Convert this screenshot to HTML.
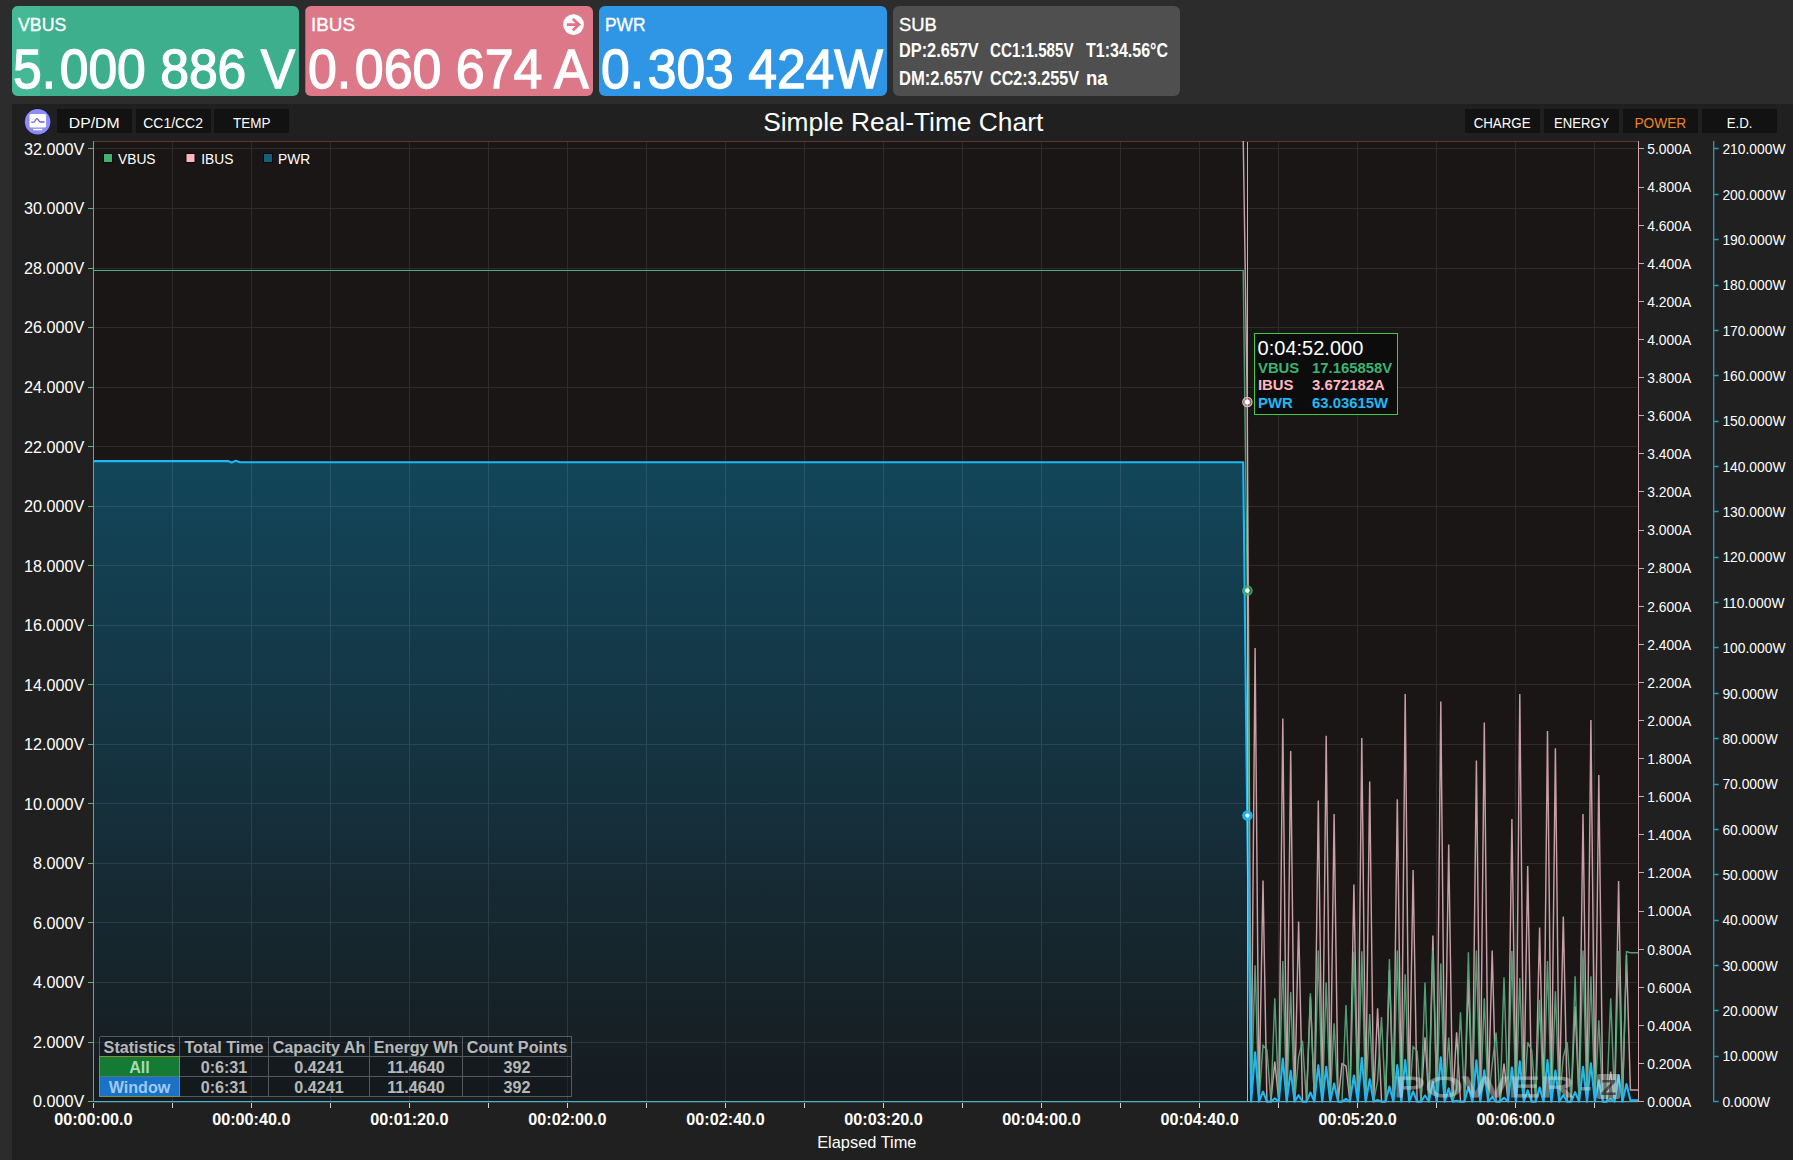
<!DOCTYPE html>
<html lang="en">
<head>
<meta charset="utf-8">
<title>Simple Real-Time Chart</title>
<style>
html,body{margin:0;padding:0;background:#2c2c2c;}
body{width:1793px;height:1160px;overflow:hidden;background:#2c2c2c;position:relative;font-family:"Liberation Sans",Arial,sans-serif;color:#fff;}
.card{position:absolute;top:6px;height:90px;border-radius:6px;overflow:hidden;}
.card .lbl{position:absolute;left:5.7px;top:9.8px;-webkit-text-stroke:0.35px #fff;font-size:18.7px;line-height:18.7px;white-space:pre;transform-origin:0 50%;transform:scaleX(.93);}
.card .val{position:absolute;left:0px;top:35.8px;font-size:55px;line-height:55px;white-space:pre;transform-origin:0 50%;-webkit-text-stroke:1.3px #fff;}
.card .val .dot{letter-spacing:3.8px;}
#c-vbus{left:12px;width:287px;background:#3daf8d;}
#c-vbus .bar{position:absolute;left:0;top:0;width:28px;height:90px;background:#45b896;}
#c-ibus{left:305px;width:288px;background:#dc7887;}
#c-ibus .bar{position:absolute;left:0;top:0;width:1px;height:90px;background:#b9596b;}
#c-pwr{left:599px;width:288px;background:#2e96e4;}
#c-sub{left:893px;width:287px;background:#4f4f4f;}
#c-sub .row{position:absolute;left:0;font-size:20px;line-height:20px;font-weight:bold;white-space:pre;}
#c-sub .row span{position:absolute;top:0;transform-origin:0 50%;transform:scaleX(.84);}
.panel{position:absolute;left:12px;top:104px;width:1781px;height:1056px;background:#202020;}
.btn{position:absolute;top:109px;width:75px;height:24.4px;background:#121212;font-size:15px;line-height:27.6px;text-align:center;color:#fff;}
.btn.on{color:#ee8420;}
.btn span{display:inline-block;transform-origin:50% 50%;}
svg.chart{position:absolute;left:0;top:0;}
svg.ico{position:absolute;}
</style>
</head>
<body>
<div class="card" id="c-vbus"><div class="bar"></div><div class="lbl" style="transform:scaleX(.95)">VBUS</div><div class="val" style="left:1.2px;transform:scaleX(.939)">5<span class="dot">.</span>000 886 V</div></div>
<div class="card" id="c-ibus"><div class="bar"></div><div class="lbl" style="transform:scaleX(1.01)">IBUS</div><div class="val" style="left:2.7px;transform:scaleX(.943)">0<span class="dot">.</span>060 674 A</div>
<svg class="ico" style="left:258px;top:8px" width="22" height="22" viewBox="0 0 22 22"><circle cx="10.5" cy="10.55" r="10.4" fill="#fff"/><path d="M3.8,10.55H15.6M9.8,4.9L16.0,10.55L9.8,16.2" fill="none" stroke="#e07387" stroke-width="2.7" stroke-linejoin="miter"/></svg></div>
<div class="card" id="c-pwr"><div class="lbl">PWR</div><div class="val" style="left:1.8px;transform:scaleX(.939)">0<span class="dot">.</span>303 424W</div></div>
<div class="card" id="c-sub"><div class="lbl" style="transform:scaleX(.985)">SUB</div>
<div class="row" style="top:33.9px"><span style="left:6.2px;transform:scaleX(.815)">DP:2.657V</span><span style="left:97px;transform:scaleX(.76)">CC1:1.585V</span><span style="left:192.7px;transform:scaleX(.8)">T1:34.56&deg;C</span></div>
<div class="row" style="top:61.8px"><span style="left:6.2px;transform:scaleX(.828)">DM:2.657V</span><span style="left:97px;transform:scaleX(.808)">CC2:3.255V</span><span style="left:193px;transform:scaleX(.93)">na</span></div>
</div>
<div class="panel"></div>
<svg class="ico" style="left:23px;top:107px" width="30" height="30" viewBox="23 107 30 30"><circle cx="37.6" cy="121.7" r="13.4" fill="#14143a"/><circle cx="37.6" cy="121.7" r="12.8" fill="#8e8df5"/><rect x="29.5" y="113.9" width="16.6" height="13.6" rx="1.6" fill="#fff"/><rect x="33.1" y="128.8" width="9.1" height="1.5" fill="#fff"/><path d="M31.7,122.1H33.6C35.2,122.1 35.6,118.6 36.9,118.6C38.2,118.6 38.8,122 40.6,122H44" fill="none" stroke="#6a5fd0" stroke-width="1.35" stroke-linecap="round"/></svg>
<div class="btn" style="left:57px"><span style="transform:scaleX(1.05)">DP/DM</span></div>
<div class="btn" style="left:135.5px"><span style="transform:scaleX(0.93)">CC1/CC2</span></div>
<div class="btn" style="left:214px"><span style="transform:scaleX(0.9)">TEMP</span></div>
<div class="btn" style="left:1465px"><span style="transform:scaleX(0.887)">CHARGE</span></div>
<div class="btn" style="left:1544px"><span style="transform:scaleX(0.872)">ENERGY</span></div>
<div class="btn on" style="left:1623px"><span style="transform:scaleX(0.913)">POWER</span></div>
<div class="btn" style="left:1702px"><span style="transform:scaleX(0.885)">E.D.</span></div>
<svg class="chart" width="1793" height="1160" viewBox="0 0 1793 1160" font-family="'Liberation Sans', Arial, sans-serif">
<defs><linearGradient id="pg" gradientUnits="userSpaceOnUse" x1="0" y1="461" x2="0" y2="1101"><stop offset="0" stop-color="#12465a"/><stop offset="0.5" stop-color="#15313e"/><stop offset="0.78" stop-color="#16252c"/><stop offset="1" stop-color="#161c20"/></linearGradient><clipPath id="pc"><rect x="93" y="141" width="1546" height="962"/></clipPath></defs>
<rect x="94" y="141" width="1545" height="960.5" fill="#191615"/>
<g clip-path="url(#pc)">
<path d="M93.5,1101.6 L93.5,461.1 L227.8,461.1 L231.8,462.6 L235.7,460.8 L239.7,462.2 L1243.2,462.2 L1247.2,815.6 L1251.1,1101.6 L1255.1,1052.2 L1259.0,1101.6 L1263.0,1091.7 L1266.9,1101.6 L1270.9,1101.6 L1274.8,1098.3 L1278.8,1101.6 L1282.8,1058.6 L1286.7,1101.6 L1290.7,1070.9 L1294.6,1101.6 L1298.6,1095.2 L1302.5,1101.6 L1306.5,1101.6 L1310.4,1092.5 L1314.4,1101.6 L1318.3,1065.2 L1322.3,1101.6 L1326.2,1066.8 L1330.2,1101.6 L1334.1,1083.6 L1338.1,1101.6 L1342.0,1101.6 L1346.0,1098.9 L1349.9,1101.6 L1353.9,1075.5 L1357.8,1101.6 L1361.8,1057.9 L1365.7,1101.6 L1369.7,1079.2 L1373.6,1101.6 L1377.6,1100.0 L1381.5,1101.6 L1385.5,1101.6 L1389.4,1086.6 L1393.4,1101.6 L1397.3,1065.0 L1401.3,1101.6 L1405.2,1060.1 L1409.2,1101.6 L1413.1,1091.5 L1417.1,1101.6 L1421.0,1101.6 L1425.0,1095.5 L1428.9,1101.6 L1432.9,1081.5 L1436.8,1101.6 L1440.8,1057.4 L1444.7,1101.6 L1448.7,1088.4 L1452.6,1101.6 L1456.6,1100.9 L1460.5,1101.6 L1464.5,1101.6 L1468.4,1087.0 L1472.4,1101.6 L1476.4,1060.3 L1480.3,1101.6 L1484.3,1070.3 L1488.2,1101.6 L1492.2,1097.1 L1496.1,1101.6 L1500.1,1101.6 L1504.0,1097.8 L1508.0,1101.6 L1511.9,1067.6 L1515.9,1101.6 L1519.8,1061.3 L1523.8,1101.6 L1527.7,1090.4 L1531.7,1101.6 L1535.6,1101.6 L1539.6,1087.4 L1543.5,1101.6 L1547.5,1060.0 L1551.4,1101.6 L1555.4,1070.5 L1559.3,1101.6 L1563.3,1095.0 L1567.2,1101.6 L1571.2,1101.6 L1575.1,1092.1 L1579.1,1101.6 L1583.0,1066.8 L1587.0,1101.6 L1590.9,1063.3 L1594.9,1101.6 L1598.8,1080.4 L1602.8,1101.6 L1606.7,1101.6 L1610.7,1099.1 L1614.6,1101.6 L1618.6,1075.0 L1622.5,1101.6 L1626.5,1084.0 L1630.4,1100.2 L1638.3,1100.2 L1638.3,1101.6 Z" fill="url(#pg)"/>
</g>
<path d="M172.5,141.5V1101M251.5,141.5V1101M330.5,141.5V1101M409.5,141.5V1101M488.5,141.5V1101M567.5,141.5V1101M646.5,141.5V1101M725.5,141.5V1101M804.5,141.5V1101M883.5,141.5V1101M962.5,141.5V1101M1041.5,141.5V1101M1120.5,141.5V1101M1199.5,141.5V1101M1278.5,141.5V1101M1357.5,141.5V1101M1436.5,141.5V1101M1515.5,141.5V1101M1594.5,141.5V1101M94,1042.5H1638M94,982.5H1638M94,922.5H1638M94,863.5H1638M94,803.5H1638M94,744.5H1638M94,684.5H1638M94,625.5H1638M94,565.5H1638M94,506.5H1638M94,446.5H1638M94,387.5H1638M94,327.5H1638M94,268.5H1638M94,208.5H1638M94,148.5H1638" stroke="#ffffff" stroke-opacity="0.095" stroke-width="1" fill="none" shape-rendering="crispEdges"/>
<path d="M94,141.5H1638" stroke="#8a5a3c" stroke-opacity="0.55" stroke-width="1" fill="none" shape-rendering="crispEdges"/>
<g clip-path="url(#pc)" fill="none" stroke-linejoin="miter" stroke-miterlimit="3">
<polyline points="93.5,137.5 1243.2,137.5 1247.2,402.0 1251.1,1101.6 1255.1,648.1 1259.0,1101.6 1263.0,880.6 1266.9,1101.6 1270.9,1101.6 1274.8,1061.6 1278.8,1101.6 1282.8,718.6 1286.7,1101.6 1290.7,751.0 1294.6,1101.6 1298.6,921.4 1302.5,1101.6 1306.5,1101.6 1310.4,996.8 1314.4,1101.6 1318.3,800.6 1322.3,1101.6 1326.2,735.8 1330.2,1101.6 1334.1,813.9 1338.1,1101.6 1342.0,1063.7 1346.0,1066.0 1349.9,1101.6 1353.9,884.4 1357.8,1101.6 1361.8,738.1 1365.7,1101.6 1369.7,781.5 1373.6,1101.6 1377.6,1008.2 1381.5,1101.6 1385.5,1101.6 1389.4,970.1 1393.4,1101.6 1397.3,799.2 1401.3,1101.6 1405.2,694.1 1409.2,1101.6 1413.1,870.1 1417.1,1101.6 1421.0,1101.6 1425.0,1037.4 1428.9,1101.6 1432.9,935.5 1436.8,1101.6 1440.8,701.5 1444.7,1101.6 1448.7,844.4 1452.6,1101.6 1456.6,1032.4 1460.5,1101.6 1464.5,1101.6 1468.4,979.7 1472.4,1101.6 1476.4,760.6 1480.3,1101.6 1484.3,722.4 1488.2,1101.6 1492.2,950.5 1496.1,1101.6 1500.1,1101.6 1504.0,1063.5 1508.0,1101.6 1511.9,819.0 1515.9,1101.6 1519.8,693.9 1523.8,1101.6 1527.7,866.1 1531.7,1101.6 1535.6,1101.6 1539.6,927.6 1543.5,1101.6 1547.5,731.0 1551.4,1101.6 1555.4,748.2 1559.3,1101.6 1563.3,916.4 1567.2,1101.6 1571.2,1101.6 1575.1,1006.3 1579.1,1101.6 1583.0,814.1 1587.0,1101.6 1590.9,720.0 1594.9,1101.6 1598.8,775.0 1602.8,1101.6 1606.7,1101.6 1610.7,1071.5 1614.6,1101.6 1618.6,881.0 1622.5,1101.6 1626.5,954.9 1630.4,1090.0 1638.3,1090.0" stroke="#e4b6be" stroke-width="1.45" stroke-opacity="0.86"/>
<path d="M94,270.5H1243.2" stroke="#4fae7c" stroke-width="1" shape-rendering="crispEdges"/>
<polyline points="1243.2,270.1 1247.2,590.6 1251.1,1101.6 1255.1,965.3 1259.0,1101.6 1263.0,1045.3 1266.9,1049.8 1270.9,1101.6 1274.8,998.3 1278.8,1101.6 1282.8,961.1 1286.7,1101.6 1290.7,992.0 1294.6,1101.6 1298.6,1056.9 1302.5,1040.9 1306.5,1101.6 1310.4,993.2 1314.4,1101.6 1318.3,950.4 1322.3,1101.6 1326.2,982.5 1330.2,1101.6 1334.1,1023.3 1338.1,1101.6 1342.0,1101.6 1346.0,1005.1 1349.9,1101.6 1353.9,951.6 1357.8,1101.6 1361.8,951.3 1365.7,1101.6 1369.7,1014.1 1373.6,1101.6 1377.6,1080.8 1381.5,1017.1 1385.5,1101.6 1389.4,959.0 1393.4,1101.6 1397.3,950.4 1401.3,1101.6 1405.2,974.2 1409.2,1101.6 1413.1,1046.8 1417.1,1051.0 1421.0,1101.6 1425.0,982.5 1428.9,1101.6 1432.9,950.4 1436.8,1101.6 1440.8,963.5 1444.7,1101.6 1448.7,1037.6 1452.6,1101.6 1456.6,1089.7 1460.5,1012.3 1464.5,1101.6 1468.4,952.2 1472.4,1101.6 1476.4,950.4 1480.3,1101.6 1484.3,998.3 1488.2,1101.6 1492.2,1064.1 1496.1,1032.5 1500.1,1101.6 1504.0,977.2 1508.0,1101.6 1511.9,951.0 1515.9,1101.6 1519.8,978.1 1523.8,1101.6 1527.7,1042.4 1531.7,1050.1 1535.6,1101.6 1539.6,999.8 1543.5,1101.6 1547.5,961.1 1551.4,1101.6 1555.4,991.4 1559.3,1101.6 1563.3,1056.9 1567.2,1042.1 1571.2,1101.6 1575.1,976.3 1579.1,1101.6 1583.0,950.4 1587.0,1101.6 1590.9,976.3 1594.9,1101.6 1598.8,1020.3 1602.8,1101.6 1606.7,1101.6 1610.7,998.3 1614.6,1101.6 1618.6,951.0 1622.5,1101.6 1626.5,951.6 1630.4,952.7 1638.3,952.7" stroke="#58ad80" stroke-width="1.45" stroke-opacity="0.9"/>
<polyline points="93.5,461.1 227.8,461.1 231.8,462.6 235.7,460.8 239.7,462.2 1243.2,462.2 1247.2,815.6 1251.1,1101.6 1255.1,1052.2 1259.0,1101.6 1263.0,1091.7 1266.9,1101.6 1270.9,1101.6 1274.8,1098.3 1278.8,1101.6 1282.8,1058.6 1286.7,1101.6 1290.7,1070.9 1294.6,1101.6 1298.6,1095.2 1302.5,1101.6 1306.5,1101.6 1310.4,1092.5 1314.4,1101.6 1318.3,1065.2 1322.3,1101.6 1326.2,1066.8 1330.2,1101.6 1334.1,1083.6 1338.1,1101.6 1342.0,1101.6 1346.0,1098.9 1349.9,1101.6 1353.9,1075.5 1357.8,1101.6 1361.8,1057.9 1365.7,1101.6 1369.7,1079.2 1373.6,1101.6 1377.6,1100.0 1381.5,1101.6 1385.5,1101.6 1389.4,1086.6 1393.4,1101.6 1397.3,1065.0 1401.3,1101.6 1405.2,1060.1 1409.2,1101.6 1413.1,1091.5 1417.1,1101.6 1421.0,1101.6 1425.0,1095.5 1428.9,1101.6 1432.9,1081.5 1436.8,1101.6 1440.8,1057.4 1444.7,1101.6 1448.7,1088.4 1452.6,1101.6 1456.6,1100.9 1460.5,1101.6 1464.5,1101.6 1468.4,1087.0 1472.4,1101.6 1476.4,1060.3 1480.3,1101.6 1484.3,1070.3 1488.2,1101.6 1492.2,1097.1 1496.1,1101.6 1500.1,1101.6 1504.0,1097.8 1508.0,1101.6 1511.9,1067.6 1515.9,1101.6 1519.8,1061.3 1523.8,1101.6 1527.7,1090.4 1531.7,1101.6 1535.6,1101.6 1539.6,1087.4 1543.5,1101.6 1547.5,1060.0 1551.4,1101.6 1555.4,1070.5 1559.3,1101.6 1563.3,1095.0 1567.2,1101.6 1571.2,1101.6 1575.1,1092.1 1579.1,1101.6 1583.0,1066.8 1587.0,1101.6 1590.9,1063.3 1594.9,1101.6 1598.8,1080.4 1602.8,1101.6 1606.7,1101.6 1610.7,1099.1 1614.6,1101.6 1618.6,1075.0 1622.5,1101.6 1626.5,1084.0 1630.4,1100.2 1638.3,1100.2" stroke="#1fb8f4" stroke-width="2.1" stroke-linejoin="round"/>
<path d="M94,1101.6H1638" stroke="#56aecb" stroke-width="1.4"/>
</g>
<g shape-rendering="crispEdges" fill="none">
<path d="M93.5,141V1102M88,1101.5H94M88,1042.5H94M88,982.5H94M88,922.5H94M88,863.5H94M88,803.5H94M88,744.5H94M88,684.5H94M88,625.5H94M88,565.5H94M88,506.5H94M88,446.5H94M88,387.5H94M88,327.5H94M88,268.5H94M88,208.5H94M88,148.5H94" stroke="#58b083" stroke-width="1"/>
<path d="M1638.5,141V1102M1638,1101.5H1644M1638,1063.5H1644M1638,1025.5H1644M1638,987.5H1644M1638,949.5H1644M1638,911.5H1644M1638,872.5H1644M1638,834.5H1644M1638,796.5H1644M1638,758.5H1644M1638,720.5H1644M1638,682.5H1644M1638,644.5H1644M1638,606.5H1644M1638,568.5H1644M1638,530.5H1644M1638,491.5H1644M1638,453.5H1644M1638,415.5H1644M1638,377.5H1644M1638,339.5H1644M1638,301.5H1644M1638,263.5H1644M1638,225.5H1644M1638,187.5H1644M1638,148.5H1644" stroke="#d9a3ab" stroke-width="1"/>
<path d="M1713.7,141V1102M1713,1101.5H1718.7M1713,1056.5H1718.7M1713,1010.5H1718.7M1713,965.5H1718.7M1713,920.5H1718.7M1713,874.5H1718.7M1713,829.5H1718.7M1713,784.5H1718.7M1713,738.5H1718.7M1713,693.5H1718.7M1713,647.5H1718.7M1713,602.5H1718.7M1713,557.5H1718.7M1713,511.5H1718.7M1713,466.5H1718.7M1713,421.5H1718.7M1713,375.5H1718.7M1713,330.5H1718.7M1713,285.5H1718.7M1713,239.5H1718.7M1713,194.5H1718.7M1713,148.5H1718.7" stroke="#2b9ab8" stroke-width="1.3" shape-rendering="auto"/>
<path d="M93.5,1103V1108M172.5,1103V1108M251.5,1103V1108M330.5,1103V1108M409.5,1103V1108M488.5,1103V1108M567.5,1103V1108M646.5,1103V1108M725.5,1103V1108M804.5,1103V1108M883.5,1103V1108M962.5,1103V1108M1041.5,1103V1108M1120.5,1103V1108M1199.5,1103V1108M1278.5,1103V1108M1357.5,1103V1108M1436.5,1103V1108M1515.5,1103V1108M1594.5,1103V1108" stroke="#d4d4d4" stroke-width="1"/>
</g>
<g fill="#ffffff" font-size="16.2px" text-anchor="end">
<text x="84.4" y="1107.4">0.000V</text>
<text x="84.4" y="1047.9">2.000V</text>
<text x="84.4" y="988.3">4.000V</text>
<text x="84.4" y="928.8">6.000V</text>
<text x="84.4" y="869.2">8.000V</text>
<text x="84.4" y="809.7">10.000V</text>
<text x="84.4" y="750.2">12.000V</text>
<text x="84.4" y="690.6">14.000V</text>
<text x="84.4" y="631.1">16.000V</text>
<text x="84.4" y="571.5">18.000V</text>
<text x="84.4" y="512.0">20.000V</text>
<text x="84.4" y="452.5">22.000V</text>
<text x="84.4" y="392.9">24.000V</text>
<text x="84.4" y="333.4">26.000V</text>
<text x="84.4" y="273.8">28.000V</text>
<text x="84.4" y="214.3">30.000V</text>
<text x="84.4" y="154.8">32.000V</text>
</g>
<g fill="#ffffff" font-size="13.85px">
<text x="1647.3" y="1106.9">0.000A</text>
<text x="1647.3" y="1068.8">0.200A</text>
<text x="1647.3" y="1030.7">0.400A</text>
<text x="1647.3" y="992.6">0.600A</text>
<text x="1647.3" y="954.5">0.800A</text>
<text x="1647.3" y="916.4">1.000A</text>
<text x="1647.3" y="878.3">1.200A</text>
<text x="1647.3" y="840.2">1.400A</text>
<text x="1647.3" y="802.1">1.600A</text>
<text x="1647.3" y="763.9">1.800A</text>
<text x="1647.3" y="725.8">2.000A</text>
<text x="1647.3" y="687.7">2.200A</text>
<text x="1647.3" y="649.6">2.400A</text>
<text x="1647.3" y="611.5">2.600A</text>
<text x="1647.3" y="573.4">2.800A</text>
<text x="1647.3" y="535.3">3.000A</text>
<text x="1647.3" y="497.2">3.200A</text>
<text x="1647.3" y="459.1">3.400A</text>
<text x="1647.3" y="421.0">3.600A</text>
<text x="1647.3" y="382.9">3.800A</text>
<text x="1647.3" y="344.8">4.000A</text>
<text x="1647.3" y="306.7">4.200A</text>
<text x="1647.3" y="268.6">4.400A</text>
<text x="1647.3" y="230.5">4.600A</text>
<text x="1647.3" y="192.4">4.800A</text>
<text x="1647.3" y="154.3">5.000A</text>
<text x="1722.4" y="1106.8">0.000W</text>
<text x="1722.4" y="1061.4">10.000W</text>
<text x="1722.4" y="1016.1">20.000W</text>
<text x="1722.4" y="970.7">30.000W</text>
<text x="1722.4" y="925.3">40.000W</text>
<text x="1722.4" y="880.0">50.000W</text>
<text x="1722.4" y="834.6">60.000W</text>
<text x="1722.4" y="789.2">70.000W</text>
<text x="1722.4" y="743.9">80.000W</text>
<text x="1722.4" y="698.5">90.000W</text>
<text x="1722.4" y="653.2">100.000W</text>
<text x="1722.4" y="607.8">110.000W</text>
<text x="1722.4" y="562.4">120.000W</text>
<text x="1722.4" y="517.1">130.000W</text>
<text x="1722.4" y="471.7">140.000W</text>
<text x="1722.4" y="426.3">150.000W</text>
<text x="1722.4" y="381.0">160.000W</text>
<text x="1722.4" y="335.6">170.000W</text>
<text x="1722.4" y="290.2">180.000W</text>
<text x="1722.4" y="244.9">190.000W</text>
<text x="1722.4" y="199.5">200.000W</text>
<text x="1722.4" y="154.2">210.000W</text>
</g>
<g fill="#ffffff" font-size="16.2px" font-weight="bold" text-anchor="middle">
<text x="93.3" y="1124.9">00:00:00.0</text>
<text x="251.3" y="1124.9">00:00:40.0</text>
<text x="409.4" y="1124.9">00:01:20.0</text>
<text x="567.4" y="1124.9">00:02:00.0</text>
<text x="725.5" y="1124.9">00:02:40.0</text>
<text x="883.5" y="1124.9">00:03:20.0</text>
<text x="1041.5" y="1124.9">00:04:00.0</text>
<text x="1199.6" y="1124.9">00:04:40.0</text>
<text x="1357.6" y="1124.9">00:05:20.0</text>
<text x="1515.7" y="1124.9">00:06:00.0</text>
</g>
<text x="866.8" y="1147.8" fill="#ffffff" font-size="16.4px" text-anchor="middle">Elapsed Time</text>
<text x="903.2" y="130.7" fill="#ffffff" font-size="26.35px" text-anchor="middle">Simple Real-Time Chart</text>
<g font-size="13.8px" fill="#ffffff">
<rect x="103.5" y="153.5" width="9" height="9" fill="#3cb371" stroke="#0a0a0a" stroke-width="1"/><text x="118" y="163.7">VBUS</text>
<rect x="186" y="153.5" width="9" height="9" fill="#ffb6c1" stroke="#0a0a0a" stroke-width="1"/><text x="201.2" y="163.7">IBUS</text>
<rect x="263.5" y="153.5" width="9" height="9" fill="#175e79" stroke="#0a0a0a" stroke-width="1"/><text x="278" y="163.7">PWR</text>
</g>
<g opacity="0.42" fill="#dfe8e8" stroke="#dfe8e8" stroke-width="1.1" font-size="29.3px"><text x="1393.5" y="1097" textLength="181" lengthAdjust="spacingAndGlyphs">POWER</text><text x="1580" y="1097" textLength="11.5" lengthAdjust="spacingAndGlyphs">-</text><rect x="1597" y="1074" width="23" height="25" rx="2" stroke="none"/></g>
<text x="1600.5" y="1094.6" fill="#14181a" fill-opacity="0.6" font-size="22px" font-weight="bold" textLength="16" lengthAdjust="spacingAndGlyphs">Z</text>
<rect x="99.5" y="1036.5" width="472" height="60" fill="#101416" fill-opacity="0.35"/>
<rect x="100" y="1057" width="79" height="19.5" fill="#157a35"/>
<rect x="100" y="1077" width="79" height="19.5" fill="#1a72c8"/>
<path d="M99.5,1036.5V1096.5M179.5,1036.5V1096.5M268.5,1036.5V1096.5M369.5,1036.5V1096.5M462.5,1036.5V1096.5M571.5,1036.5V1096.5M99.5,1036.5H571.5M99.5,1056.5H571.5M99.5,1076.5H571.5M99.5,1096.5H571.5" stroke="#ffffff" stroke-opacity="0.28" stroke-width="1" fill="none" shape-rendering="crispEdges"/>
<path d="M99.5,1056.5H179.5V1096.5H99.5Z" stroke="#8a8f3a" stroke-width="1" fill="none" shape-rendering="crispEdges"/>
<g font-size="16.15px" font-weight="bold" text-anchor="middle" fill="#ffffff" fill-opacity="0.7">
<text x="139.5" y="1052.9">Statistics</text>
<text x="224.0" y="1052.9">Total Time</text>
<text x="319.0" y="1052.9">Capacity Ah</text>
<text x="416.0" y="1052.9">Energy Wh</text>
<text x="517.0" y="1052.9">Count Points</text>
<text x="139.5" y="1072.9" fill="#b9e8c0" fill-opacity="0.9">All</text>
<text x="224.0" y="1072.9">0:6:31</text>
<text x="319.0" y="1072.9">0.4241</text>
<text x="416.0" y="1072.9">11.4640</text>
<text x="517.0" y="1072.9">392</text>
<text x="139.5" y="1092.9" fill="#b5d6f5" fill-opacity="0.9">Window</text>
<text x="224.0" y="1092.9">0:6:31</text>
<text x="319.0" y="1092.9">0.4241</text>
<text x="416.0" y="1092.9">11.4640</text>
<text x="517.0" y="1092.9">392</text>
</g>
<path d="M1247.5,141.5V1101" stroke="#b4b4ae" stroke-width="1" fill="none" shape-rendering="crispEdges"/>
<circle cx="1247.4" cy="590.6" r="4.7" fill="#3cb371" fill-opacity="0.55" stroke="#3cb371" stroke-width="1.1"/>
<circle cx="1247.4" cy="590.6" r="2.3" fill="#ffffff"/>
<circle cx="1247.4" cy="402.0" r="4.7" fill="#f0b4c0" fill-opacity="0.5" stroke="#f0b4c0" stroke-width="1.1"/>
<circle cx="1247.4" cy="402.0" r="2.5" fill="#ffffff"/>
<circle cx="1247.4" cy="815.6" r="4.7" fill="#1fb8f4" fill-opacity="0.9" stroke="#1fb8f4" stroke-width="1.1"/>
<circle cx="1247.4" cy="815.6" r="2.1" fill="#ffffff"/>
<rect x="1254.5" y="333.5" width="142.5" height="81" fill="#0c0c0c" stroke="#45c845" stroke-width="1" shape-rendering="crispEdges"/>
<text x="1257.6" y="354.6" fill="#ffffff" font-size="20px">0:04:52.000</text>
<g font-size="14.85px" font-weight="bold">
<text x="1258" y="372.7" fill="#3cb371">VBUS</text><text x="1312" y="372.7" fill="#3cb371">17.165858V</text>
<text x="1258" y="389.9" fill="#ffb6c1">IBUS</text><text x="1312" y="389.9" fill="#ffb6c1">3.672182A</text>
<text x="1258" y="407.5" fill="#1fb8f4">PWR</text><text x="1312" y="407.5" fill="#1fb8f4">63.03615W</text>
</g>
</svg>
</body>
</html>
